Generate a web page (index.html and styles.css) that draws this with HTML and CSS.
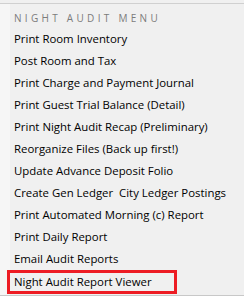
FILE: index.html
```html
<!DOCTYPE html>
<html>
<head>
  <title>Night Audit Menu</title>
  <link rel="stylesheet" href="styles.css">
</head>
<body>
  <div class="menu">
    <div class="menu-title">NIGHT AUDIT MENU</div>
    <ul class="menu-list">
      <li>Print Room Inventory</li>
      <li>Post Room and Tax</li>
      <li>Print Charge and Payment Journal</li>
      <li>Print Guest Trial Balance (Detail)</li>
      <li>Print Night Audit Recap (Preliminary)</li>
      <li>Reorganize Files (Back up first!)</li>
      <li>Update Advance Deposit Folio</li>
      <li>Create Gen Ledger&nbsp; City Ledger Postings</li>
      <li>Print Automated Morning (c) Report</li>
      <li>Print Daily Report</li>
      <li>Email Audit Reports</li>
      <li class="marked">Night Audit Report Viewer</li>
    </ul>
  </div>
</body>
</html>
```

FILE: styles.css
```css
html, body { margin: 0; padding: 0; }
body {
  width: 244px;
  height: 296px;
  overflow: hidden;
  background: #f0f0f0;
  font-family: "Open Sans", "Noto Sans", sans-serif;
  color: #000000;
}

/* --- menu panel --- */
.menu {
  margin-top: 3px;
  height: 291px;
  border-top: 1px solid #d0d0d0;
  border-bottom: 1px solid #c8c8c8;
  background: linear-gradient(to right, #f6f6f6 0, #f6f6f6 10px, #f0f0f0 10px);
}
.menu-title {
  padding: 7px 0 0 14px;
  height: 17px;
  line-height: 14px;
  font-size: 10px;
  letter-spacing: 3.3px;
  color: #7c7c7c;
}
.menu-list {
  list-style: none;
  margin: 0;
  padding: 0;
}
.menu-list li {
  height: 22px;
  line-height: 22px;
  padding-left: 14px;
  font-size: 11.4px;
  white-space: nowrap;
}
/* highlighted entry */
.menu-list li.marked {
  margin-left: 7px;
  padding-left: 4px;
  width: 160px;
  height: 18px;
  line-height: 18px;
  border: 3px solid #ed1c24;
}
```
